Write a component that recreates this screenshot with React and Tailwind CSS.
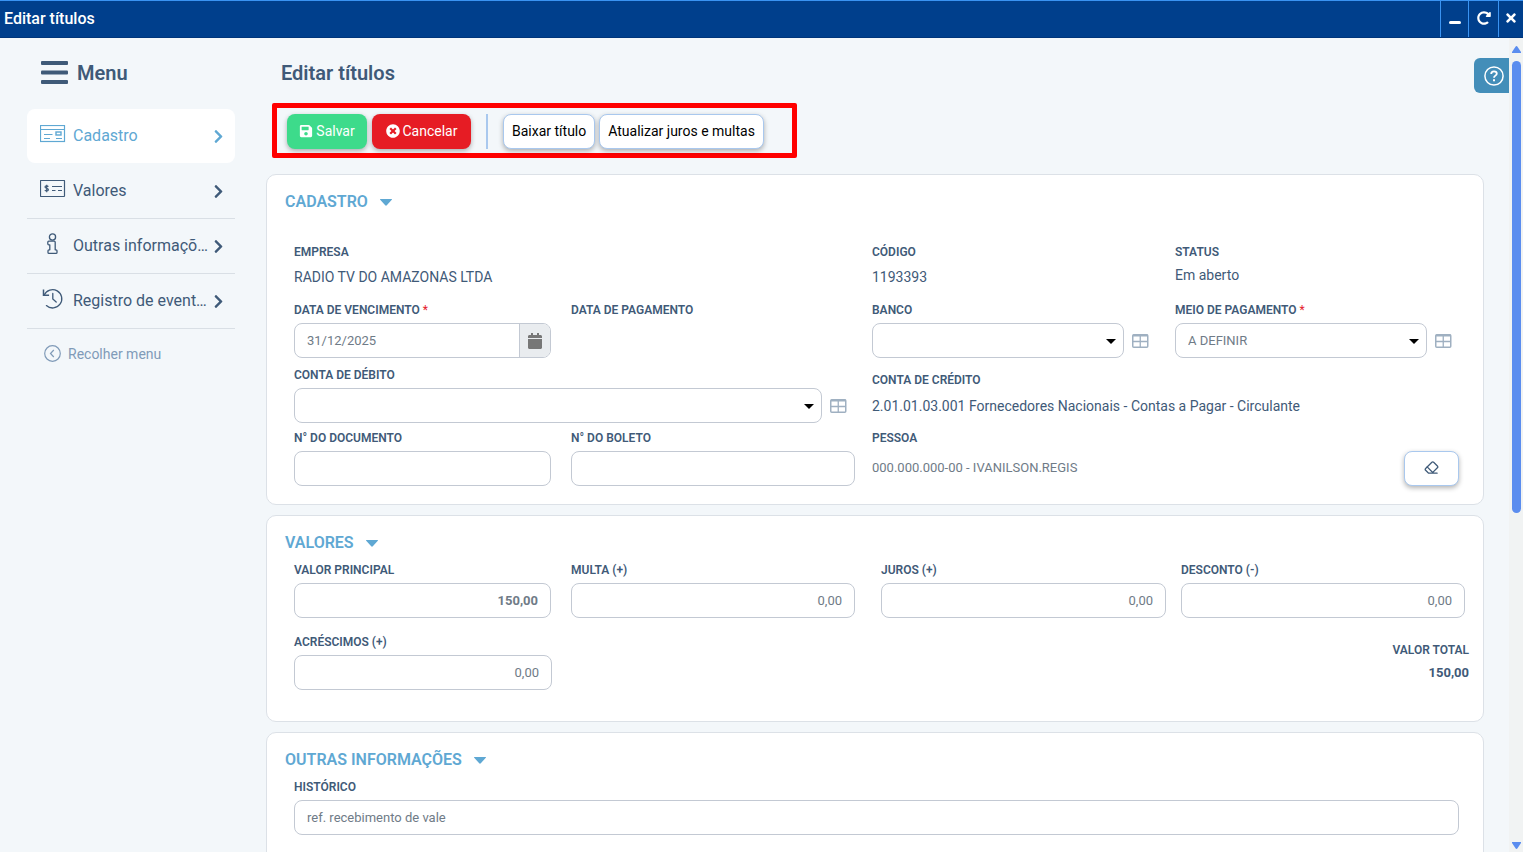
import React, { useState } from "react";
import {
  FaCalendar,
  FaChevronRight,
  FaRedoAlt,
  FaSave,
  FaTimes,
  FaTimesCircle,
} from "react-icons/fa";
import { Eraser } from "lucide-react";

const inputClass =
  "h-[35px] w-full rounded-lg border border-[#c3c9d3] bg-white px-3 text-[13px] text-[#6f7b87] outline-none";
const valueClass = "text-sm leading-5 text-[#3f5a78]";
const whiteButton =
  "flex h-[35px] items-center justify-center rounded-lg border border-[#a9c8ee] bg-white px-2 pb-0.5 text-sm shadow-[0_2px_5px_rgba(0,0,0,0.3)]";

function CadastroIcon() {
  return (
    <svg width="26" height="18" viewBox="0 0 26 18" fill="none" stroke="currentColor">
      <rect x="0.5" y="0.5" width="24" height="16" strokeWidth="1.2" />
      <path d="M0.5 4.5h24M4 9.5h8.5M4 13.5h6M16 13.5h6" strokeWidth="1.2" />
      <rect x="16" y="7" width="5" height="3" strokeWidth="1.4" />
    </svg>
  );
}

function ValoresIcon() {
  return (
    <svg width="26" height="18" viewBox="0 0 26 18" fill="none" stroke="currentColor">
      <rect x="0.5" y="0.5" width="24" height="16" rx="0.5" strokeWidth="1.2" />
      <path d="M12 6.5h10M12 10.5h3.5M18 10.5h4" />
      <path
        d="M8.3 6.8C7.8 5.6 5 5.6 5 7.1c0 1.6 3.4 1 3.4 2.7 0 1.5-2.9 1.5-3.5 0.2M6.7 4.7v7.6"
        strokeWidth="1.2"
      />
    </svg>
  );
}

function InfoIcon() {
  return (
    <svg width="26" height="22" viewBox="0 0 26 22" fill="none" stroke="currentColor" strokeWidth="1.3">
      <circle cx="12.5" cy="4" r="3.1" />
      <path
        d="M8.8 8.2h5.4c.6 0 1 .4 1 1v7.6h.8c.6 0 1 .4 1 1v1.6c0 .6-.4 1-1 1H9c-.6 0-1-.4-1-1v-1.6c0-.6.4-1 1-1h.8v-5h-1c-.6 0-1-.4-1-1V9.2c0-.6.4-1 1-1z"
        strokeLinejoin="round"
      />
    </svg>
  );
}

function HistoryIcon() {
  return (
    <svg width="26" height="22" viewBox="0 0 26 22" fill="none" stroke="currentColor" strokeWidth="1.3">
      <path d="M4.2 7A9.2 9.2 0 1 1 6.4 17.6" strokeLinecap="round" />
      <path d="M3.5 1.5v5.8h5.6" strokeWidth="1.5" />
      <path d="M12.8 5.5V11l3.4 3" strokeLinecap="round" />
    </svg>
  );
}

function TableIcon() {
  return (
    <svg width="17" height="14" viewBox="0 0 17 14" fill="none" stroke="#9fb0c1" className="shrink-0">
      <rect x="0.75" y="0.75" width="15" height="12.5" rx="1" strokeWidth="1.5" />
      <path d="M1 1.5h15" strokeWidth="2" />
      <path d="M8.25 2v11M1 7.5h15" strokeWidth="1.3" />
    </svg>
  );
}

function Label({ htmlFor, required, children }) {
  return (
    <label htmlFor={htmlFor} className="block text-xs leading-[18px] font-semibold text-[#3f5a78]">
      {children}
      {required && <span className="font-normal text-[#e5202b]"> *</span>}
    </label>
  );
}

function Caption({ children }) {
  return <div className="text-xs leading-[18px] font-semibold text-[#3f5a78]">{children}</div>;
}

function Field({ id, label, value, bold, right }) {
  return (
    <div className="flex flex-col gap-1">
      <Label htmlFor={id}>{label}</Label>
      <input
        id={id}
        type="text"
        defaultValue={value}
        className={`${inputClass} ${right ? "text-right" : ""} ${bold ? "font-bold" : ""}`}
      />
    </div>
  );
}

function SelectField({ id, label, required, options }) {
  return (
    <div className="flex flex-col gap-1">
      <Label htmlFor={id} required={required}>
        {label}
      </Label>
      <div className="flex items-center gap-2">
        <div className="relative flex-1">
          <select id={id} className={`${inputClass} appearance-none`}>
            {options.map((option) => (
              <option key={option}>{option}</option>
            ))}
          </select>
          <svg
            width="10"
            height="5"
            viewBox="0 0 10 5"
            className="pointer-events-none absolute top-4 right-2"
          >
            <path d="M0 0h10L5 5z" fill="#000" />
          </svg>
        </div>
        <button type="button" aria-label={`Tabela ${label}`}>
          <TableIcon />
        </button>
      </div>
    </div>
  );
}

function Card({ title, children }) {
  const [open, setOpen] = useState(true);

  return (
    <section className="rounded-[10px] border border-[#dce1e7] bg-white pt-[15px]">
      <h2 className="pl-[18px] text-base leading-6 font-semibold text-[#5fa8d3]">
        <button type="button" onClick={() => setOpen(!open)} className="flex items-center gap-3">
          {title}
          <svg width="12" height="7" viewBox="0 0 12 7">
            <path
              d="M0.5 0h11c.5 0 .6.4.3.7L6.8 6.3c-.4.5-1.2.5-1.6 0L.2.7C-.1.4 0 0 .5 0z"
              fill="currentColor"
            />
          </svg>
        </button>
      </h2>
      {open && children}
    </section>
  );
}

const menuItems = [
  { label: "Cadastro", icon: CadastroIcon, active: true },
  { label: "Valores", icon: ValoresIcon },
  { label: "Outras informações", icon: InfoIcon },
  { label: "Registro de eventos", icon: HistoryIcon },
];

function Sidebar() {
  return (
    <aside className="ml-[27px] w-52 shrink-0 text-[#3f5a78]">
      <div className="mb-0.5 flex h-[69px] items-center gap-[9px] pl-3.5">
        <svg width="27" height="24" viewBox="0 0 27 24" fill="currentColor">
          <rect y="0" width="27" height="4" rx="1" />
          <rect y="9.5" width="27" height="4" rx="1" />
          <rect y="19" width="27" height="4" rx="1" />
        </svg>
        <span className="text-xl font-semibold">Menu</span>
      </div>
      <nav>
        {menuItems.map(({ label, icon: Icon, active }) => (
          <a
            key={label}
            href="#"
            className={
              active
                ? "mb-px flex h-[54px] items-center rounded-lg bg-white pr-[9px] pl-[13px] text-[#5fa8d3]"
                : "flex h-[55px] items-center border-b border-[#d9dfe5] pr-[9px] pl-[13px]"
            }
          >
            <span className="mb-1 w-[33px] shrink-0">
              <Icon />
            </span>
            <span className="flex-1 truncate text-base">{label}</span>
            <FaChevronRight size={15} className="shrink-0" />
          </a>
        ))}
      </nav>
      <button type="button" className="mt-[15px] ml-[17px] flex items-center gap-[7px] text-sm text-[#809bb8]">
        <svg width="17" height="17" viewBox="0 0 17 17" fill="none" stroke="currentColor" className="mb-0.5">
          <circle cx="8.5" cy="8.5" r="7.8" strokeWidth="1.2" />
          <path d="M9.8 5L6.5 8.5l3.3 3.5" strokeWidth="1.2" />
        </svg>
        Recolher menu
      </button>
    </aside>
  );
}

function Toolbar() {
  return (
    <div className="mt-4 ml-1.5 flex w-[525px] items-center rounded-xs border-5 border-[#ff0000] pt-1.5 pb-1 pl-2.5 text-sm">
      <button
        type="button"
        className="flex h-[35px] w-20 items-center justify-center gap-[3px] rounded-lg bg-[#3ddb8b] pb-0.5 text-white shadow-[0_2px_5px_rgba(0,0,0,0.3)]"
      >
        <FaSave size={14} />
        Salvar
      </button>
      <button
        type="button"
        className="ml-[5px] flex h-[35px] w-[99px] items-center justify-center gap-[3px] rounded-lg bg-[#e61c24] pb-0.5 text-white shadow-[0_2px_5px_rgba(0,0,0,0.3)]"
      >
        <FaTimesCircle size={14} />
        Cancelar
      </button>
      <div className="mx-[15px] h-[35px] w-0.5 bg-[#a9c8ee]" />
      <button type="button" className={`${whiteButton} text-black`}>
        Baixar título
      </button>
      <button type="button" className={`${whiteButton} ml-1 text-black`}>
        Atualizar juros e multas
      </button>
    </div>
  );
}

function CadastroCard() {
  return (
    <Card title="CADASTRO">
      <div className="mt-[29px] grid grid-cols-[277fr_301fr_303fr_284fr] pr-6 pb-[18px] pl-[27px]">
        <div className="col-span-2 flex h-[58px] flex-col gap-1.5">
          <Caption>EMPRESA</Caption>
          <p className={valueClass}>RADIO TV DO AMAZONAS LTDA</p>
        </div>
        <div className="flex flex-col gap-1.5">
          <Caption>CÓDIGO</Caption>
          <p className={valueClass}>1193393</p>
        </div>
        <div className="flex flex-col gap-1">
          <Caption>STATUS</Caption>
          <p className={valueClass}>Em aberto</p>
        </div>

        <div className="flex flex-col gap-1 pr-5">
          <Label htmlFor="vencimento" required>
            DATA DE VENCIMENTO
          </Label>
          <div className="flex h-[35px] overflow-hidden rounded-lg border border-[#c3c9d3]">
            <input
              id="vencimento"
              type="text"
              defaultValue="31/12/2025"
              className="min-w-0 flex-1 px-3 text-[13px] text-[#6f7b87] outline-none"
            />
            <button
              type="button"
              aria-label="Abrir calendário"
              className="flex w-[31px] items-center justify-center border-l border-[#c3c9d3] bg-[#e9ecef] text-[#777777]"
            >
              <FaCalendar size={16} />
            </button>
          </div>
        </div>
        <Caption>DATA DE PAGAMENTO</Caption>
        <div className="pr-[26px]">
          <SelectField id="banco" label="BANCO" options={[""]} />
        </div>
        <div className="pr-[7px]">
          <SelectField id="meio" label="MEIO DE PAGAMENTO" required options={["A DEFINIR"]} />
        </div>

        <div className="col-span-2 pt-2 pr-[25px]">
          <SelectField id="debito" label="CONTA DE DÉBITO" options={[""]} />
        </div>
        <div className="col-span-2 flex flex-col gap-[7px] pt-[13px]">
          <Caption>CONTA DE CRÉDITO</Caption>
          <p className={valueClass}>2.01.01.03.001 Fornecedores Nacionais - Contas a Pagar - Circulante</p>
        </div>

        <div className="pt-1.5 pr-5">
          <Field id="documento" label="N° DO DOCUMENTO" />
        </div>
        <div className="pt-1.5 pr-[17px]">
          <Field id="boleto" label="N° DO BOLETO" />
        </div>
        <div className="col-span-2 flex flex-col gap-1 pt-1.5">
          <Caption>PESSOA</Caption>
          <div className="flex items-center justify-between">
            <span className="pb-0.5 text-[13px] text-[#6f7b87]">000.000.000-00 - IVANILSON.REGIS</span>
            <button
              type="button"
              aria-label="Limpar pessoa"
              className={`${whiteButton} w-[55px] text-[#3f5a78]`}
            >
              <Eraser size={15} strokeWidth={2} />
            </button>
          </div>
        </div>
      </div>
    </Card>
  );
}

function ValoresCard() {
  return (
    <Card title="VALORES">
      <div className="mt-1.5 grid grid-cols-[277fr_310fr_300fr_284fr] gap-y-[15px] pr-[18px] pb-[31px] pl-[27px]">
        <div className="pr-5">
          <Field id="principal" label="VALOR PRINCIPAL" value="150,00" right bold />
        </div>
        <div className="pr-[26px]">
          <Field id="multa" label="MULTA (+)" value="0,00" right />
        </div>
        <div className="pr-[15px]">
          <Field id="juros" label="JUROS (+)" value="0,00" right />
        </div>
        <Field id="desconto" label="DESCONTO (-)" value="0,00" right />
        <div className="pr-[19px]">
          <Field id="acrescimos" label="ACRÉSCIMOS (+)" value="0,00" right />
        </div>
        <div className="col-span-3 -mr-1 flex flex-col gap-1 pt-2 text-right">
          <Caption>VALOR TOTAL</Caption>
          <p className="text-[13px] leading-5 font-bold text-[#3f5a78]">150,00</p>
        </div>
      </div>
    </Card>
  );
}

function OutrasInformacoesCard() {
  return (
    <Card title="OUTRAS INFORMAÇÕES">
      <div className="mt-1.5 pr-6 pb-8 pl-[27px]">
        <Field id="historico" label="HISTÓRICO" value="ref. recebimento de vale" />
      </div>
    </Card>
  );
}

function Scrollbar() {
  return (
    <div className="flex w-3.5 shrink-0 flex-col items-center bg-[#f1f3f3] pt-2 pb-[3px] text-[#5b8def]">
      <svg width="9" height="7" viewBox="0 0 9 7" fill="currentColor" className="shrink-0">
        <path d="M3.5.7c.5-.8 1.5-.8 2 0L9 6v1H0V6z" />
      </svg>
      <div className="mt-2 mb-[7px] w-full flex-1">
        <div className="mx-auto h-7/12 w-[9px] rounded-full bg-[#5b8def]" />
      </div>
      <svg width="9" height="7" viewBox="0 0 9 7" fill="currentColor" className="shrink-0">
        <path d="M3.5 6.3c.5.8 1.5.8 2 0L9 1V0H0v1z" />
      </svg>
    </div>
  );
}

export default function App() {
  return (
    <div className="flex h-screen flex-col overflow-hidden bg-[#f3f7fa] font-['Roboto',sans-serif]">
      <header className="flex h-[38px] shrink-0 items-stretch border-t border-b border-t-[#3a93f2] border-b-[#00357a] bg-[#003f8c] text-white">
        <h1 className="flex-1 self-center pl-1 text-base font-medium">Editar títulos</h1>
        <button
          type="button"
          aria-label="Minimizar"
          className="flex w-7 items-center justify-center border-l border-[#3a93f2] pt-1.5"
        >
          <span className="h-[3px] w-3 rounded-xs bg-white" />
        </button>
        <button
          type="button"
          aria-label="Recarregar"
          className="flex w-[30px] items-center justify-center border-l border-[#3a93f2] pb-0.5"
        >
          <FaRedoAlt size={14} />
        </button>
        <button
          type="button"
          aria-label="Fechar"
          className="flex w-[25px] items-center justify-center border-l border-[#3a93f2] pb-0.5"
        >
          <FaTimes size={14} />
        </button>
      </header>

      <div className="flex min-h-0 flex-1">
        <Sidebar />
        <div className="relative ml-[31px] min-w-0 flex-1 overflow-hidden pr-[25px]">
          <h2 className="mt-[21px] pl-[15px] text-xl leading-7 font-semibold text-[#3f5a78]">Editar títulos</h2>
          <button
            type="button"
            aria-label="Ajuda"
            className="absolute top-5 right-0 flex h-[35px] w-[35px] items-center justify-center rounded-l-md bg-[#438eb9] pl-1 text-white"
          >
            <svg width="20" height="20" viewBox="0 0 20 20" fill="none" stroke="currentColor">
              <circle cx="10" cy="10" r="9.1" strokeWidth="1.5" />
              <path
                d="M7.2 8c0-1.7 1.2-2.7 2.8-2.7s2.8 1 2.8 2.4c0 1.9-2.8 2-2.8 4"
                strokeWidth="1.8"
              />
              <path d="M10 13.2v2" strokeWidth="2" />
            </svg>
          </button>
          <Toolbar />
          <div className="mt-4 flex flex-col gap-2.5">
            <CadastroCard />
            <ValoresCard />
            <OutrasInformacoesCard />
          </div>
        </div>
        <Scrollbar />
      </div>
    </div>
  );
}
